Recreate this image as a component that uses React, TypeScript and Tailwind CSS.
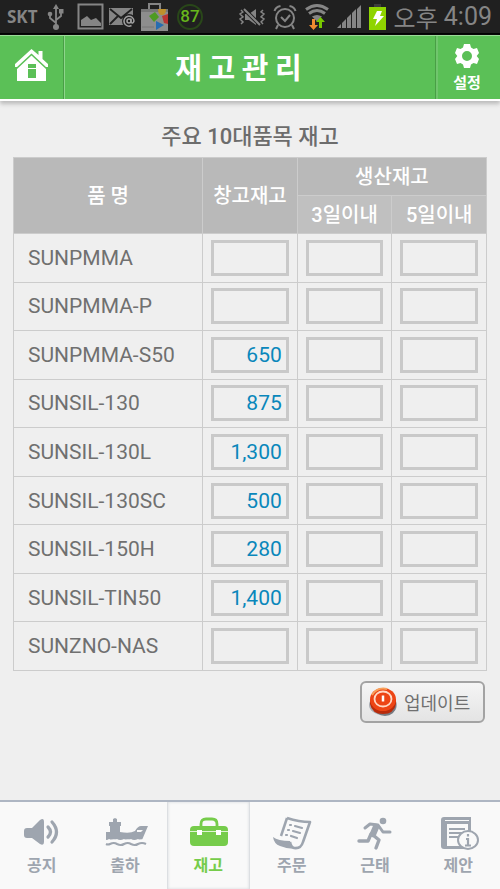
import type { ReactNode } from "react";

const items = [
  { name: "SUNPMMA", stock: "" },
  { name: "SUNPMMA-P", stock: "" },
  { name: "SUNPMMA-S50", stock: "650" },
  { name: "SUNSIL-130", stock: "875" },
  { name: "SUNSIL-130L", stock: "1,300" },
  { name: "SUNSIL-130SC", stock: "500" },
  { name: "SUNSIL-150H", stock: "280" },
  { name: "SUNSIL-TIN50", stock: "1,400" },
  { name: "SUNZNO-NAS", stock: "" },
];

function StatusBar() {
  return (
    <div className="flex h-[35px] items-center justify-between border-b-2 border-black bg-[#202020] pr-2 pl-[7px] text-[#858585]">
      <div className="flex items-center">
        <span className="mr-2 w-8 font-['Open_Sans','Roboto',sans-serif] text-[17px] leading-6 font-bold">
          SKT
        </span>
        {/* usb */}
        <svg className="mr-3 w-[18px]" viewBox="0 0 18 28" fill="none" stroke="currentColor" strokeWidth="1.8">
          <path d="M9 4v19M9 20l-6-5v-4M9 17l5-4V9" />
          <path d="M6 6l3-5 3 5z" fill="currentColor" stroke="none" />
          <circle cx="9" cy="24" r="3" fill="currentColor" stroke="none" />
          <circle cx="3" cy="11" r="2.3" fill="currentColor" stroke="none" />
          <path d="M12 6h4.500v4.500H12z" fill="currentColor" stroke="none" />
        </svg>
        {/* picture */}
        <svg className="mr-1 w-[27px]" viewBox="0 0 27 27" fill="none" stroke="currentColor" strokeWidth="2">
          <path d="M1.500 1.500h24v24h-24z" />
          <path d="M4 23v-6l6-4 4 4 5-2 5 5v3z" fill="currentColor" stroke="none" />
        </svg>
        {/* mail */}
        <svg className="mr-1 w-[28px]" viewBox="0 0 28 22" fill="none">
          <path d="M1 2h24v17H1z" fill="#858585" />
          <path d="M2 3l11 9L24 3M2 18l8-8M24 18l-8-8" stroke="#202020" strokeWidth="1.800" />
          <circle cx="21" cy="15" r="7" fill="#202020" />
          <circle cx="21" cy="15" r="2" stroke="#a0a0a0" strokeWidth="1.500" />
          <path d="M23 12.500v4q2 1.500 3-1.500a5 5 0 1 0-2.500 4.500" stroke="#a0a0a0" strokeWidth="1.500" />
        </svg>
        {/* store bag */}
        <svg className="mr-2 w-[29px]" viewBox="0 0 29 30" fill="none">
          <path d="M9 7V2h11v5" stroke="#858585" strokeWidth="2" />
          <path d="M1 7h27v22H1z" fill="#8d8d8d" />
          <path d="M1 7h27v3H1z" fill="#777" />
          <path d="M9 14l6-4 4 5-5 5z" fill="#4d9b22" />
          <path d="M18 7h8q0 6-4 6t-4-6z" fill="#bd912c" />
          <path d="M22 14l6-2v10l-4-1z" fill="#ba3532" />
          <path d="M16 19l8 4-8 5z" fill="#276cb0" />
          <path d="M2 25h12" stroke="#777" />
        </svg>
        <span className="flex size-[26px] items-center justify-center rounded-full border-2 border-[#294719] font-['Roboto',sans-serif] text-[17px] leading-none font-medium text-[#67b51c]">
          87
        </span>
      </div>
      <div className="flex items-center gap-2">
        {/* vibrate */}
        <svg className="w-[26px]" viewBox="0 0 26 20" fill="none" stroke="currentColor" strokeWidth="1.500">
          <path d="M2 3l2 2-3 2 3 3-3 2 3 3-2 2M24 3l-2 2 3 2-3 3 3 2-3 3 2 2" />
          <path d="M6 7h4l7-5v16l-7-5H6z" fill="currentColor" stroke="none" />
          <path d="M5 2l16 16" stroke="#202020" strokeWidth="4" />
          <path d="M5 2l16 16" strokeWidth="2" />
        </svg>
        {/* alarm */}
        <svg className="w-[24px]" viewBox="0 0 24 26" fill="none" stroke="currentColor" strokeWidth="2">
          <circle cx="12" cy="14" r="9" />
          <path d="M1.500 7q1-4 6-5M22.500 7q-1-4-6-5M5 21l-2 4M19 21l2 4M8 13l4 4 5-6" />
        </svg>
        {/* wifi */}
        <svg className="w-[24px]" viewBox="0 0 24 28" fill="none" stroke="currentColor" strokeWidth="3">
          <path d="M1 6.500q11-8 22 0M4 10.500q8-6 16 0" />
          <path d="M7 13.500q5-3 10 0l-5 5z" fill="currentColor" stroke="none" />
          <path d="M7 16v6H4l4.500 5 4.500-5h-3v-6z" fill="#f08b30" stroke="none" />
          <path d="M14 25v-6h-3l4.500-5 4.500 5h-3v6z" fill="#78c800" stroke="none" />
        </svg>
        {/* signal */}
        <svg className="w-[24px]" viewBox="0 0 24 24" fill="currentColor">
          <path d="M0 23l4-4v4zM5 18l4-4v9H5zM10 13l4-4v14h-4zM15 8l4-4v19h-4zM20 4l4-4v23h-4z" />
        </svg>
        {/* battery */}
        <svg className="w-[17px]" viewBox="0 0 17 26">
          <path d="M5 0h7v4H5z" fill="#3d3d3d" />
          <path d="M0 3h17v23H0z" fill="#8fd400" />
          <path d="M8 7h5l-2 5h4L6 22l2-7H4z" fill="#fff" />
        </svg>
        <span className="flex items-center gap-1.5 whitespace-nowrap">
          <span className="font-['Noto_Sans_CJK_KR',sans-serif] text-[24px] leading-[33px]">오후</span>
          <span className="font-['Roboto',sans-serif] text-[25px] leading-[33px]">4:09</span>
        </span>
      </div>
    </div>
  );
}

function Header() {
  return (
    <header className="flex h-[66px] items-stretch border-t border-b-2 border-t-[#9bdb98] border-b-white bg-[#5bc057] text-white shadow-[0_3px_4px_#bbbbbb]">
      <button aria-label="홈" className="flex w-16 items-center justify-center border-r border-[#489f45] pb-1">
        <svg className="w-[33px]" viewBox="0 0 33 33" fill="currentColor">
          <path d="M16.500 0l7 6V2h4v8L33 15v3h-2L16.500 4.500 2 18H0v-3z" />
          <path fillRule="evenodd" d="M16.500 6.500L31 20v12H2V20zM13 15v4h8v-4zM13 20v9h8v-9z" />
        </svg>
      </button>
      <h1 className="flex flex-1 items-center justify-center border-l border-[#8ed58b] pr-6 pb-1 font-['Noto_Sans_CJK_KR',sans-serif] text-[29px] leading-10 font-bold">
        재 고 관 리
      </h1>
      <button className="flex w-16 flex-col items-center justify-center gap-1 border-l-2 border-[#70c56d] pr-1 font-['Noto_Sans_CJK_KR',sans-serif] text-[15px] leading-5 font-bold shadow-[-1px_0_0_#489f45]">
        <svg className="w-6" viewBox="0 0 24 24" fill="currentColor">
          <path
            fillRule="evenodd"
            d="M9 0h6l1 3.500 2.500 1.400L22 4l2 5-2.300 3L24 15l-2 5-3.500-.9L16 20.500 15 24H9l-1-3.500-2.500-1.400L2 20l-2-5 2.300-3L0 9l2-5 3.500.9L8 3.500zM12 7a5 5 0 1 0 0 10 5 5 0 0 0 0-10z"
          />
        </svg>
        설정
      </button>
    </header>
  );
}

function StockInput({ label, value }: { label: string; value: string }) {
  return (
    <input
      type="text"
      aria-label={label}
      defaultValue={value}
      className="block h-9 w-full border-[3px] border-[#c9c9c9] bg-[#efefef] px-1 text-right text-[21px] text-[#0a87bb]"
    />
  );
}

function StockTable() {
  return (
    <table className="h-[514px] w-full table-fixed border-collapse text-[21px] leading-6 text-[#707070]">
      <colgroup>
        <col className="w-2/5" />
        <col className="w-1/5" />
        <col className="w-1/5" />
        <col className="w-1/5" />
      </colgroup>
      <thead className="bg-[#b9b9b9] text-[20px] text-white">
        <tr className="h-[38px]">
          <th rowSpan={2} className="border border-[#cccccc] font-medium">품 명</th>
          <th rowSpan={2} className="border border-[#cccccc] font-medium">창고재고</th>
          <th colSpan={2} className="border border-[#cccccc] font-medium">생산재고</th>
        </tr>
        <tr className="h-[38px] bg-[#c0c0c0]">
          <th className="border border-[#cccccc] font-medium">3일이내</th>
          <th className="border border-[#cccccc] font-medium">5일이내</th>
        </tr>
      </thead>
      <tbody>
        {items.map((item) => (
          <tr key={item.name}>
            <td className="border border-[#cccccc] pl-3.5">{item.name}</td>
            <td className="border border-[#cccccc] px-2">
              <StockInput label={`${item.name} 창고재고`} value={item.stock} />
            </td>
            <td className="border border-[#cccccc] px-2">
              <StockInput label={`${item.name} 3일이내`} value="" />
            </td>
            <td className="border border-[#cccccc] px-2">
              <StockInput label={`${item.name} 5일이내`} value="" />
            </td>
          </tr>
        ))}
      </tbody>
    </table>
  );
}

function UpdateButton() {
  return (
    <button className="flex h-[42px] w-[125px] items-center gap-1.5 rounded-md border-2 border-[#a3a3a3] bg-linear-to-b from-[#f5f5f5] to-[#e4e4e4] pl-1.5 font-['Noto_Sans_CJK_KR',sans-serif] text-[18px] leading-6 whitespace-nowrap text-[#707070]">
      <svg className="w-[30px] shrink-0" viewBox="0 0 30 30" fill="none">
        <ellipse cx="15" cy="18" rx="14" ry="10" fill="#a9adb4" />
        <ellipse cx="17" cy="20" rx="11" ry="9" fill="#777b82" />
        <path d="M2 12v5q2 10 13 10t13-10v-5z" fill="#b92b0b" />
        <ellipse cx="15" cy="12.500" rx="13" ry="11.500" fill="#ed4515" />
        <path d="M4 8q5-8 15-6" stroke="#f8a15b" strokeWidth="2" />
        <ellipse cx="15" cy="12" rx="8.500" ry="7.500" stroke="#ffd9c6" strokeWidth="1.800" />
        <path d="M15 8.500v6" stroke="#fff" strokeWidth="2.500" />
      </svg>
      업데이트
    </button>
  );
}

const tabs: { label: string; icon: ReactNode }[] = [
  {
    label: "공지",
    icon: (
      <>
        <path d="M3 12h5l8-8q4-3 4 2v20q0 4-4 2l-8-6H3q-3 0-3-3v-4q0-3 3-3z" fill="currentColor" />
        <path d="M24 11q5 5 0 10M28 6q9 10 0 20" stroke="currentColor" strokeWidth="3.200" strokeLinecap="round" />
      </>
    ),
  },
  {
    label: "출하",
    icon: (
      <>
        <path
          d="M-1 16h4v-6H2V6h4V3l2-1 2 1v3h4v4h-1v6q10 2 15-1 3-5 6-5h7l-6 14q-3 0-4-1-4 2-7 0-4 2-7 0-4 2-7 0-4 2-8 0-1 1-3 1z"
          fill="currentColor"
        />
        <path d="M30 14h6l-2 2h-4z" fill="#f9f9f9" />
        <path d="M-1 25q2 1 4 0 4-2 7 0 4 2 7 0 4-2 7 0 4 2 7 0 4-2 8 0" stroke="#f9f9f9" strokeWidth="1.500" />
        <path d="M-1 28q2 1 4 0 4-2 7 0 4 2 7 0 4-2 7 0 4 2 7 0 4-2 8 0" stroke="currentColor" strokeWidth="2.200" />
      </>
    ),
  },
  {
    label: "재고",
    icon: (
      <>
        <path d="M11 10V8q0-5 5-5h6q5 0 5 5v2" stroke="currentColor" strokeWidth="2.800" />
        <rect x="0" y="10" width="38" height="20" rx="4" fill="currentColor" />
        <path d="M0 15.500h38" stroke="#dff5d3" strokeWidth="1.200" />
        <path d="M7 14h5v5H7zM26 14h5v5h-5z" fill="#fff" />
      </>
    ),
  },
  {
    label: "주문",
    icon: (
      <>
        <path d="M13 2q12 4 23 4l-7 20q-2 7-9 6-3-1-4-6" stroke="currentColor" strokeWidth="2.600" strokeLinejoin="round" />
        <path d="M13 2L7 20" stroke="currentColor" strokeWidth="2.500" />
        <path d="M-1 21q5 4 17 4 1 6 5 8-8 0-15-3-6-2-7-9z" fill="currentColor" />
        <path d="M21 10l7 2M19 15l7 2M17 20l6 2M16 9h1M14 14h1M12 19h1" stroke="currentColor" strokeWidth="2.200" strokeLinecap="round" />
      </>
    ),
  },
  {
    label: "근태",
    icon: (
      <>
        <circle cx="26" cy="5" r="3.300" fill="currentColor" />
        <path d="M8 12l5-4 8 1 5 7h7" stroke="currentColor" strokeWidth="3" strokeLinecap="round" strokeLinejoin="round" />
        <path d="M19 11l-3 7" stroke="currentColor" strokeWidth="6.500" strokeLinecap="round" />
        <path d="M14 18l-3 7H2M16 19l6 5-3 8" stroke="currentColor" strokeWidth="3.400" strokeLinecap="round" strokeLinejoin="round" />
      </>
    ),
  },
  {
    label: "제안",
    icon: (
      <>
        <path d="M4 1h27v5h-2V4H5v1h26v28H4q-3 0-3-3V4q0-3 3-3z" fill="currentColor" />
        <path d="M7 8h21v22H7z" fill="#f9f9f9" />
        <path d="M9 13h16M9 17h13M9 21h9" stroke="currentColor" strokeWidth="1.800" />
        <ellipse cx="28" cy="24" rx="10" ry="9" fill="#f9f9f9" stroke="currentColor" strokeWidth="2" />
        <path d="M26 23h2v6M25 29.500h6M28 18v2.500" stroke="currentColor" strokeWidth="2.200" />
      </>
    ),
  },
];

function TabBar() {
  return (
    <nav className="mt-auto grid h-[89px] grid-cols-6 border-t-2 border-[#aeb6c3] bg-[#f9f9f9]">
      {tabs.map((tab) => (
        <a
          key={tab.label}
          href="#"
          className={`flex flex-col items-center gap-0.5 pt-3.5 font-['Noto_Sans_CJK_KR',sans-serif] text-[16px] leading-6 font-bold ${
            tab.label === "재고"
              ? "border-x border-[#dcdfe2] text-[#76cc4b] shadow-[inset_0_0_3px_#d5d8dc]"
              : "text-[#9ea5af]"
          }`}
        >
          <svg className="h-[34px] w-10 overflow-visible" viewBox="-2 0 40 34" fill="none">
            {tab.icon}
          </svg>
          {tab.label}
        </a>
      ))}
    </nav>
  );
}

export default function App() {
  return (
    <div className="flex min-h-screen flex-col bg-[#efefef] font-['Roboto','Noto_Sans_CJK_KR',sans-serif]">
      <StatusBar />
      <Header />
      <main className="flex flex-col px-[13px] pt-5">
        <h2 className="h-9 text-center text-[22px] leading-8 font-medium text-[#6c6c6c]">주요 10대품목 재고</h2>
        <StockTable />
        <div className="flex justify-end pt-2.5 pr-0.5">
          <UpdateButton />
        </div>
      </main>
      <TabBar />
    </div>
  );
}
